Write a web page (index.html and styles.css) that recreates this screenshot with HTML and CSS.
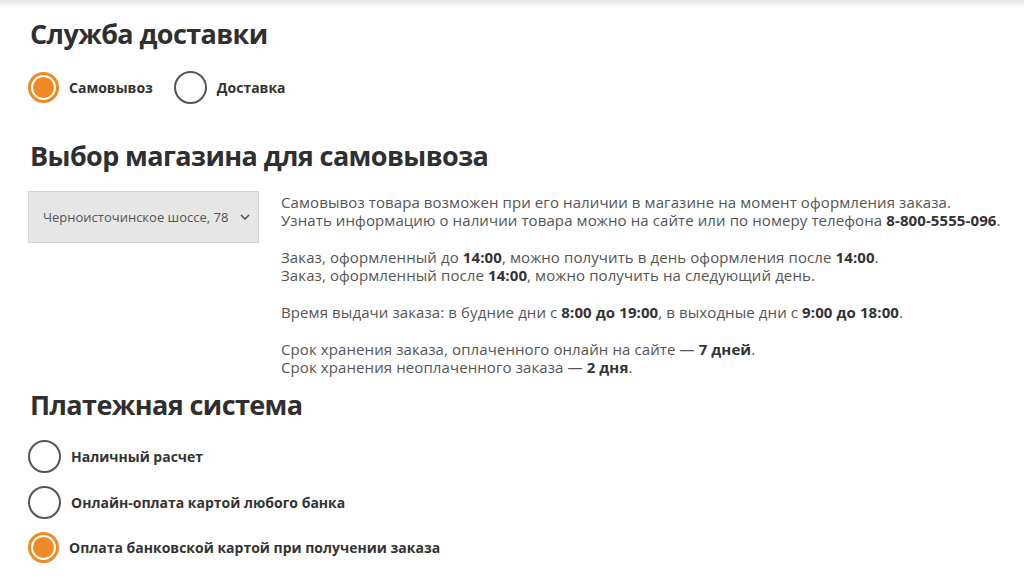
FILE: index.html
```html
<!DOCTYPE html>
<html lang="ru">
<head>
<meta charset="utf-8">
<title>Оформление заказа</title>
<link rel="stylesheet" href="styles.css">
</head>
<body>
<div class="topshadow"></div>
<main class="page">
  <section class="block">
    <h2 class="title">Служба доставки</h2>
    <div class="radios inline">
      <label class="radio"><span class="dot checked"></span><span class="rlabel">Самовывоз</span></label>
      <label class="radio"><span class="dot"></span><span class="rlabel">Доставка</span></label>
    </div>
  </section>

  <section class="block">
    <h2 class="title t2">Выбор магазина для самовывоза</h2>
    <div class="store">
      <div class="select">
        <span class="select-text">Черноисточинское шоссе, 78</span>
        <svg class="chev" width="10" height="6" viewBox="0 0 10 6"><path d="M1 1 L5 5 L9 1" fill="none" stroke="#555" stroke-width="1.6"/></svg>
      </div>
      <div class="info">
        <p>Самовывоз товара возможен при его наличии в магазине на момент оформления заказа.<br>Узнать информацию о наличии товара можно на сайте или по номеру телефона <b>8-800-5555-096</b>.</p>
        <p>Заказ, оформленный до <b>14:00</b>, можно получить в день оформления после <b>14:00</b>.<br>Заказ, оформленный после <b>14:00</b>, можно получить на следующий день.</p>
        <p>Время выдачи заказа: в будние дни с <b>8:00 до 19:00</b>, в выходные дни с <b>9:00 до 18:00</b>.</p>
        <p>Срок хранения заказа, оплаченного онлайн на сайте — <b>7 дней</b>.<br>Срок хранения неоплаченного заказа — <b>2 дня</b>.</p>
      </div>
    </div>
  </section>

  <section class="block">
    <h2 class="title t3">Платежная система</h2>
    <div class="radios stack">
      <label class="radio"><span class="dot"></span><span class="rlabel">Наличный расчет</span></label>
      <label class="radio"><span class="dot"></span><span class="rlabel">Онлайн-оплата картой любого банка</span></label>
      <label class="radio"><span class="dot checked"></span><span class="rlabel">Оплата банковской картой при получении заказа</span></label>
    </div>
  </section>
</main>
</body>
</html>
```
FILE: styles.css
```css
html, body {
  margin: 0;
  padding: 0;
  background: #fff;
}
body {
  font-family: "Open Sans", "Noto Sans", sans-serif;
  color: #333;
  position: relative;
}
.topshadow {
  position: absolute;
  top: 0;
  left: 0;
  right: 0;
  height: 8px;
  background: linear-gradient(#e6e6e6, rgba(255,255,255,0));
}
.page {
  padding: 16px 0 0 28px;
}
.title {
  margin: 0 0 0 2px;
  font-size: 27px;
  line-height: 36px;
  font-weight: 700;
  color: #2f2f2f;
  letter-spacing: -0.6px;
}
.radios.inline {
  display: flex;
  gap: 21px;
  margin-top: 19px;
}
.radio {
  display: flex;
  align-items: center;
  gap: 10px;
}
.dot {
  width: 29px;
  height: 29px;
  border: 2px solid #555;
  border-radius: 50%;
  box-sizing: content-box;
  flex: none;
}
.dot.checked {
  width: 23px;
  height: 23px;
  border: 3px solid #f08a24;
  box-shadow: inset 0 0 0 2px #fff;
  background: #f08a24;
  padding: 1px;
  background-clip: content-box;
}
.rlabel {
  font-size: 14px;
  font-weight: 700;
  color: #333;
}
.t2 {
  margin-top: 34px;
}
.store {
  display: flex;
  gap: 22px;
  margin-top: 17px;
}
.select {
  width: 229px;
  height: 50px;
  flex: none;
  box-sizing: content-box;
  border: 1px solid #d4d4d4;
  background: #e6e6e6;
  display: flex;
  align-items: center;
  justify-content: space-between;
}
.select-text {
  font-size: 13px;
  color: #555;
  margin-left: 14px;
}
.chev {
  margin-right: 8px;
}
.info {
  font-size: 15px;
  letter-spacing: 0.1px;
  line-height: 18px;
  color: #555;
  margin-top: 2px;
}
.info p {
  margin: 0 0 19px;
}
.info p:last-child {
  margin: 0;
}
.info b {
  color: #333;
}
.t3 {
  margin-top: 11px;
}
.radios.stack {
  display: flex;
  flex-direction: column;
  gap: 13px;
  margin-top: 17px;
}
```
